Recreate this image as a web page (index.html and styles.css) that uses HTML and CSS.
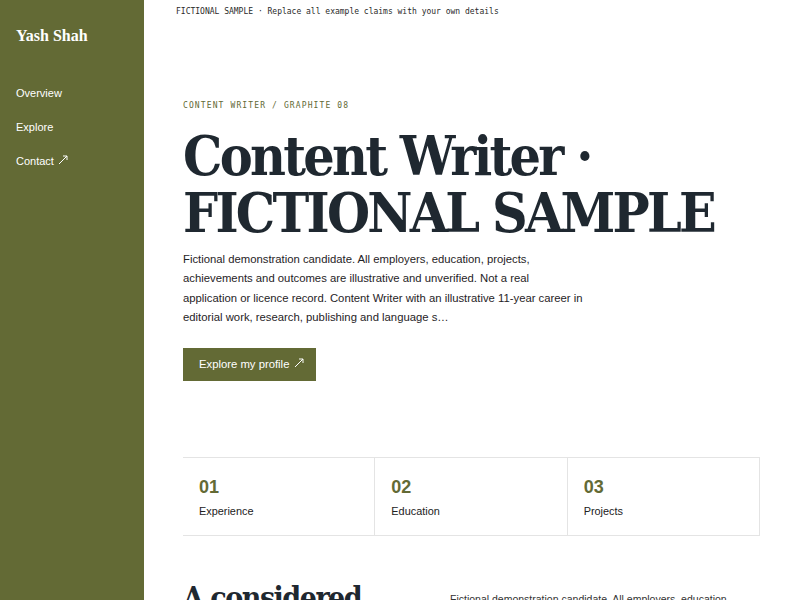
FILE: index.html
```html
<!DOCTYPE html>
<html lang="en">
<head>
<meta charset="utf-8">
<title>Yash Shah — Content Writer</title>
<link rel="stylesheet" href="styles.css">
</head>
<body>
<div class="layout">
  <aside class="sidebar">
    <div class="brand">Yash Shah</div>
    <nav class="nav">
      <a href="#overview">Overview</a>
      <a href="#explore">Explore</a>
      <a href="#contact">Contact <svg class="arrow" viewBox="0 0 10 10" aria-hidden="true"><path d="M1 9 L9 1 M5 1 H9 V5"/></svg></a>
    </nav>
  </aside>
  <main class="main">
    <div class="topbar">FICTIONAL SAMPLE · Replace all example claims with your own details</div>
    <section class="hero" id="overview">
      <div class="eyebrow">CONTENT WRITER / GRAPHITE 08</div>
      <h1 class="title">Content Writer ·<br>FICTIONAL SAMPLE</h1>
      <p class="lead">Fictional demonstration candidate. All employers, education, projects, achievements and outcomes are illustrative and unverified. Not a real<br>application or licence record. Content Writer with an illustrative 11-year career in editorial work, research, publishing and language s…</p>
      <a class="btn" href="#explore">Explore my profile <svg class="arrow" viewBox="0 0 10 10" aria-hidden="true"><path d="M1 9 L9 1 M5 1 H9 V5"/></svg></a>
      <div class="stats" id="explore">
        <div class="stat"><div class="stat-num">01</div><div class="stat-label">Experience</div></div>
        <div class="stat"><div class="stat-num">02</div><div class="stat-label">Education</div></div>
        <div class="stat"><div class="stat-num">03</div><div class="stat-label">Projects</div></div>
      </div>
      <div class="about">
        <h2 class="about-title">A considered approach</h2>
        <p class="about-text">Fictional demonstration candidate. All employers, education, projects, achievements and outcomes are illustrative and unverified.</p>
      </div>
    </section>
  </main>
</div>
</body>
</html>
```
FILE: styles.css
```css
html, body {
  margin: 0;
  padding: 0;
  background: #ffffff;
}
body {
  font-family: "Liberation Sans", Arial, sans-serif;
  color: #1f2830;
  overflow: hidden;
}
.layout {
  display: flex;
  min-height: 100vh;
}
.sidebar {
  flex: 0 0 144px;
  background: #636a35;
  color: #ffffff;
  padding: 26px 16px;
  box-sizing: border-box;
  min-height: 100vh;
}
.brand {
  font-family: "Liberation Serif", "Times New Roman", serif;
  font-weight: bold;
  font-size: 16px;
  line-height: 20px;
}
.nav {
  display: flex;
  flex-direction: column;
  gap: 18px;
  margin-top: 39px;
}
.nav a {
  color: #ffffff;
  text-decoration: none;
  font-size: 11px;
  line-height: 16px;
}
.arrow {
  width: 10px;
  height: 10px;
  margin-left: 1px;
  vertical-align: 0;
  fill: none;
  stroke: currentColor;
  stroke-width: 1;
}
.main {
  flex: 1;
  min-width: 0;
}
.topbar {
  padding: 6px 32px;
  font-family: "DejaVu Sans Mono", monospace;
  font-size: 8px;
  line-height: 12px;
  color: #2a2a2a;
}
.hero {
  padding: 77px 40px 0 39px;
}
.eyebrow {
  font-family: "DejaVu Sans Mono", monospace;
  font-size: 8px;
  line-height: 10px;
  letter-spacing: 0.14em;
  color: #636a35;
}
.title {
  margin: 16px 0 0;
  font-family: "DejaVu Serif Condensed", "DejaVu Serif", serif;
  font-weight: bold;
  font-size: 55px;
  line-height: 57px;
  letter-spacing: -0.05em;
  color: #1f2830;
}
.lead {
  margin: 9px 0 0;
  max-width: 408px;
  font-size: 11.3px;
  line-height: 19.3px;
  color: #1f2326;
}
.btn {
  display: inline-block;
  margin-top: 21px;
  padding: 0 12px 0 16px;
  height: 33px;
  line-height: 33px;
  background: #636a35;
  color: #ffffff;
  font-size: 11.3px;
  text-decoration: none;
}
.stats {
  display: grid;
  grid-template-columns: repeat(3, 1fr);
  margin-top: 76px;
  border-top: 1px solid #e4e4e4;
  border-bottom: 1px solid #e4e4e4;
}
.stat {
  padding: 18px 16px 16px;
  border-right: 1px solid #e4e4e4;
}
.stat-num {
  font-size: 18px;
  line-height: 22px;
  font-weight: bold;
  color: #636a35;
}
.stat-label {
  margin-top: 5px;
  font-size: 10.9px;
  line-height: 16px;
  color: #222;
}
.about {
  display: grid;
  grid-template-columns: 267px 1fr;
  margin-top: 45px;
}
.about-title {
  margin: 0;
  font-family: "DejaVu Serif Condensed", "DejaVu Serif", serif;
  font-weight: bold;
  font-size: 30px;
  line-height: 34px;
  letter-spacing: -0.05em;
  color: #1f2830;
}
.about-text {
  margin: 9px 0 0;
  font-size: 10.5px;
  line-height: 18px;
  color: #333;
}
```
